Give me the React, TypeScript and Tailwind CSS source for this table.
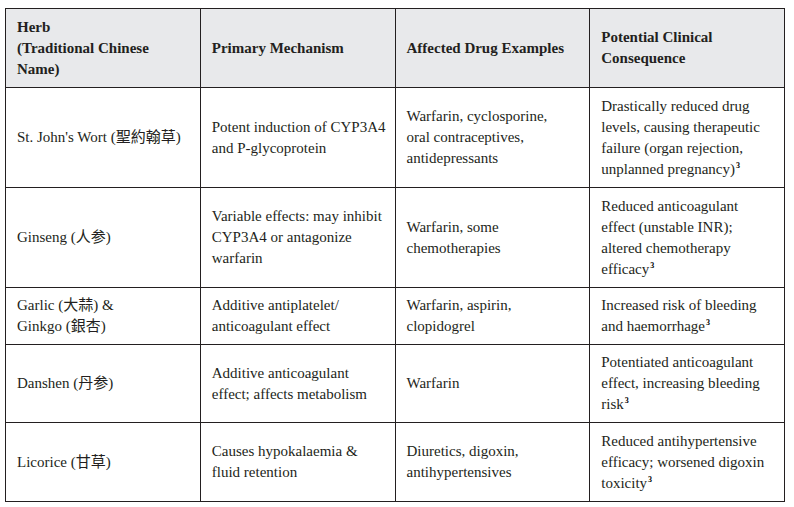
type Row = {
  herb: string[];
  mech: string[];
  drugs: string[];
  effect: string[];
  h: string;
};

const rows: Row[] = [
  {
    herb: ["St. John's Wort (聖約翰草)"],
    mech: ["Potent induction of CYP3A4", "and P-glycoprotein"],
    drugs: ["Warfarin, cyclosporine,", "oral contraceptives,", "antidepressants"],
    effect: [
      "Drastically reduced drug",
      "levels, causing therapeutic",
      "failure (organ rejection,",
      "unplanned pregnancy)",
    ],
    h: "h-[100px]",
  },
  {
    herb: ["Ginseng (人参)"],
    mech: ["Variable effects: may inhibit", "CYP3A4 or antagonize", "warfarin"],
    drugs: ["Warfarin, some", "chemotherapies"],
    effect: [
      "Reduced anticoagulant",
      "effect (unstable INR);",
      "altered chemotherapy",
      "efficacy",
    ],
    h: "h-[100px]",
  },
  {
    herb: ["Garlic (大蒜) &", "Ginkgo (銀杏)"],
    mech: ["Additive antiplatelet/", "anticoagulant effect"],
    drugs: ["Warfarin, aspirin,", "clopidogrel"],
    effect: ["Increased risk of bleeding", "and haemorrhage"],
    h: "h-[57px]",
  },
  {
    herb: ["Danshen (丹参)"],
    mech: ["Additive anticoagulant", "effect; affects metabolism"],
    drugs: ["Warfarin"],
    effect: ["Potentiated anticoagulant", "effect, increasing bleeding", "risk"],
    h: "h-[78px]",
  },
  {
    herb: ["Licorice (甘草)"],
    mech: ["Causes hypokalaemia &", "fluid retention"],
    drugs: ["Diuretics, digoxin,", "antihypertensives"],
    effect: [
      "Reduced antihypertensive",
      "efficacy; worsened digoxin",
      "toxicity",
    ],
    h: "h-[79px]",
  },
];

const cell =
  "border border-[#231f20] pl-[11px] pr-[6px] py-[7px] align-middle whitespace-nowrap";

function Lines({ lines, cite }: { lines: string[]; cite?: boolean }) {
  return (
    <>
      {lines.map((l, i) => (
        <div key={i}>
          {l}
          {cite && i === lines.length - 1 && (
            <span className="relative -top-[6px] ml-[1px] text-[8px] font-bold leading-none text-black">
              3
            </span>
          )}
        </div>
      ))}
    </>
  );
}

export default function App() {
  return (
    <div className="min-h-[507px] bg-white pl-[5px] pt-[8px] font-['Liberation_Serif','Noto_Sans_CJK_TC',serif] text-[15px] leading-[21px] text-[#231f20]">
      <table className="w-[780px] table-fixed border-collapse">
        <thead>
          <tr className="h-[79px] bg-[#e8e9eb] text-left font-bold">
            <th className={cell}>
              <Lines lines={["Herb", "(Traditional Chinese", "Name)"]} />
            </th>
            <th className={cell}>Primary Mechanism</th>
            <th className={cell}>Affected Drug Examples</th>
            <th className={cell}>
              <Lines lines={["Potential Clinical", "Consequence"]} />
            </th>
          </tr>
        </thead>
        <tbody>
          {rows.map((r) => (
            <tr key={r.herb[0]} className={r.h}>
              <td className={cell}>
                <Lines lines={r.herb} />
              </td>
              <td className={cell}>
                <Lines lines={r.mech} />
              </td>
              <td className={cell}>
                <Lines lines={r.drugs} />
              </td>
              <td className={cell}>
                <Lines lines={r.effect} cite />
              </td>
            </tr>
          ))}
        </tbody>
      </table>
    </div>
  );
}
